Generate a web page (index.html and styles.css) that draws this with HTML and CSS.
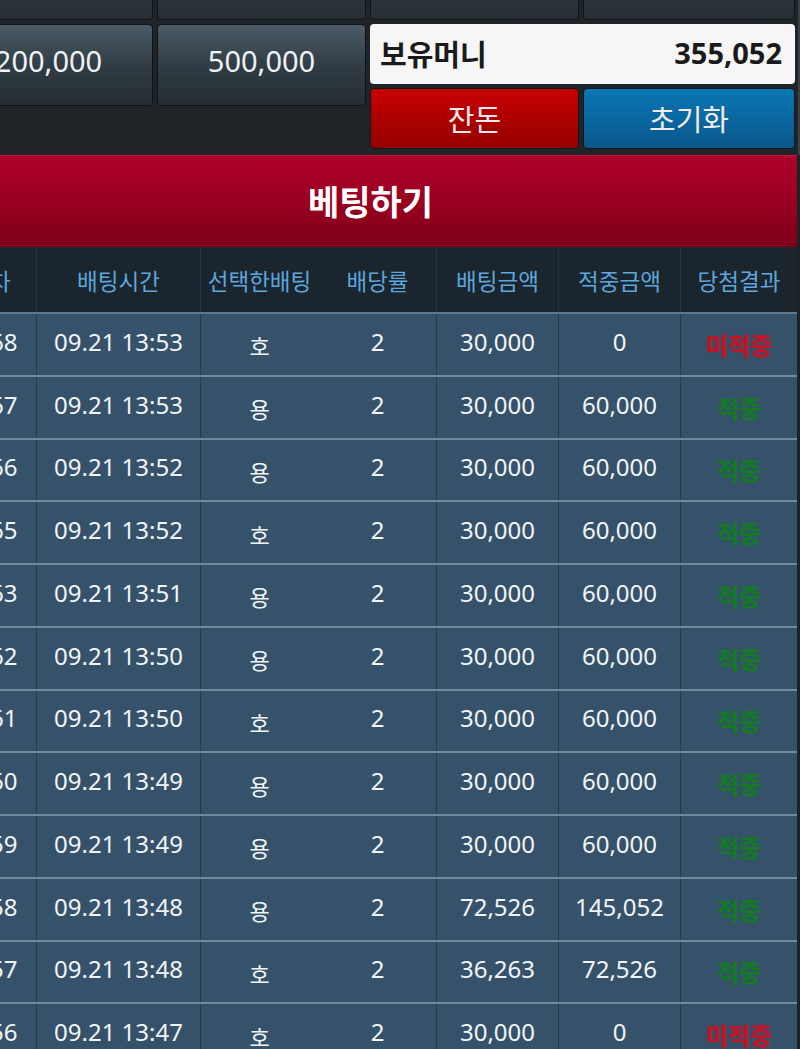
FILE: index.html
```html
<!DOCTYPE html>
<html lang="ko">
<head>
<meta charset="utf-8">
<title>베팅하기</title>
<link rel="stylesheet" href="styles.css">
</head>
<body>
<div class="page">
  <div class="panel">
    <div class="lgrid">
      <div class="chip"></div>
      <div class="chip"></div>
      <div class="chip">200,000</div>
      <div class="chip">500,000</div>
    </div>
    <div class="rgrid">
      <div class="chip"></div>
      <div class="chip"></div>
      <div class="money"><span class="money-label">보유머니</span><span class="money-val">355,052</span></div>
      <div class="act act-red">잔돈</div>
      <div class="act act-blue">초기화</div>
    </div>
  </div>
  <div class="titlebar">베팅하기</div>
  <div class="table">
    <div class="row head">
      <div class="c c1">회차</div>
      <div class="c c2">배팅시간</div>
      <div class="c c3">선택한배팅</div>
      <div class="c c4">배당률</div>
      <div class="c c5">배팅금액</div>
      <div class="c c6">적중금액</div>
      <div class="c c7">당첨결과</div>
    </div>
    <div class="row"><div class="c c1 num">1268</div><div class="c c2 num">09.21 13:53</div><div class="c c3 ko">호</div><div class="c c4 num">2</div><div class="c c5 num">30,000</div><div class="c c6 num">0</div><div class="c c7"><span class="lose">미적중</span></div></div>
    <div class="row"><div class="c c1 num">1267</div><div class="c c2 num">09.21 13:53</div><div class="c c3 ko">용</div><div class="c c4 num">2</div><div class="c c5 num">30,000</div><div class="c c6 num">60,000</div><div class="c c7"><span class="win">적중</span></div></div>
    <div class="row"><div class="c c1 num">1266</div><div class="c c2 num">09.21 13:52</div><div class="c c3 ko">용</div><div class="c c4 num">2</div><div class="c c5 num">30,000</div><div class="c c6 num">60,000</div><div class="c c7"><span class="win">적중</span></div></div>
    <div class="row"><div class="c c1 num">1265</div><div class="c c2 num">09.21 13:52</div><div class="c c3 ko">호</div><div class="c c4 num">2</div><div class="c c5 num">30,000</div><div class="c c6 num">60,000</div><div class="c c7"><span class="win">적중</span></div></div>
    <div class="row"><div class="c c1 num">1263</div><div class="c c2 num">09.21 13:51</div><div class="c c3 ko">용</div><div class="c c4 num">2</div><div class="c c5 num">30,000</div><div class="c c6 num">60,000</div><div class="c c7"><span class="win">적중</span></div></div>
    <div class="row"><div class="c c1 num">1262</div><div class="c c2 num">09.21 13:50</div><div class="c c3 ko">용</div><div class="c c4 num">2</div><div class="c c5 num">30,000</div><div class="c c6 num">60,000</div><div class="c c7"><span class="win">적중</span></div></div>
    <div class="row"><div class="c c1 num">1261</div><div class="c c2 num">09.21 13:50</div><div class="c c3 ko">호</div><div class="c c4 num">2</div><div class="c c5 num">30,000</div><div class="c c6 num">60,000</div><div class="c c7"><span class="win">적중</span></div></div>
    <div class="row"><div class="c c1 num">1260</div><div class="c c2 num">09.21 13:49</div><div class="c c3 ko">용</div><div class="c c4 num">2</div><div class="c c5 num">30,000</div><div class="c c6 num">60,000</div><div class="c c7"><span class="win">적중</span></div></div>
    <div class="row"><div class="c c1 num">1259</div><div class="c c2 num">09.21 13:49</div><div class="c c3 ko">용</div><div class="c c4 num">2</div><div class="c c5 num">30,000</div><div class="c c6 num">60,000</div><div class="c c7"><span class="win">적중</span></div></div>
    <div class="row"><div class="c c1 num">1258</div><div class="c c2 num">09.21 13:48</div><div class="c c3 ko">용</div><div class="c c4 num">2</div><div class="c c5 num">72,526</div><div class="c c6 num">145,052</div><div class="c c7"><span class="win">적중</span></div></div>
    <div class="row"><div class="c c1 num">1257</div><div class="c c2 num">09.21 13:48</div><div class="c c3 ko">호</div><div class="c c4 num">2</div><div class="c c5 num">36,263</div><div class="c c6 num">72,526</div><div class="c c7"><span class="win">적중</span></div></div>
    <div class="row"><div class="c c1 num">1256</div><div class="c c2 num">09.21 13:47</div><div class="c c3 ko">호</div><div class="c c4 num">2</div><div class="c c5 num">30,000</div><div class="c c6 num">0</div><div class="c c7"><span class="lose">미적중</span></div></div>
  </div>
</div>
</body>
</html>
```

FILE: styles.css
```css
html, body {
  margin: 0;
  padding: 0;
  background: #1c2226;
  overflow: hidden;
  height: 1049px;
}
body {
  font-family: "Noto Sans", "Noto Sans CJK KR", sans-serif;
}
.page {
  margin-left: -58px;
  width: 858px;
}
.panel {
  margin-top: -62px;
  padding: 0 5px 6px 2px;
  display: flex;
  gap: 4px;
  background: #1e2428;
  border-right: 2px solid #3a4146;
  box-sizing: border-box;
}
.lgrid {
  display: grid;
  grid-template-columns: 209px 209px;
  grid-template-rows: 82px 82px;
  gap: 4px;
}
.rgrid {
  display: grid;
  grid-template-columns: 209px 212px;
  grid-template-rows: 82px 60px 61px;
  gap: 4px;
}
.chip {
  box-sizing: border-box;
  border: 1px solid #0f1316;
  border-radius: 4px;
  background: linear-gradient(#4b5b67, #2f3a42 55%, #262e34);
  color: #eef2f4;
  font-size: 29px;
  display: flex;
  align-items: center;
  justify-content: center;
  padding-bottom: 9px;
}
.money {
  grid-column: 1 / 3;
  box-sizing: border-box;
  border-radius: 4px;
  background: #f6f6f6;
  display: flex;
  align-items: center;
  justify-content: space-between;
  padding: 0 13px 4px 10px;
  color: #1a1a1a;
  font-weight: bold;
}
.money-label {
  font-family: "Noto Sans CJK KR", sans-serif;
  font-size: 29px;
  padding-top: 2px;
}
.money-val {
  font-size: 29px;
}
.act {
  box-sizing: border-box;
  border: 1px solid #14181b;
  border-radius: 4px;
  display: flex;
  align-items: center;
  justify-content: center;
  font-family: "Noto Sans CJK KR", sans-serif;
  font-size: 29px;
  color: #f4ecec;
  padding-bottom: 2px;
}
.act-red {
  background: linear-gradient(#c80000, #a80000 60%, #960000);
}
.act-blue {
  background: linear-gradient(#0876b4, #0a649c 60%, #0a5688);
}
.titlebar {
  margin: 0 3px 0 2px;
  height: 92px;
  background: linear-gradient(#ae0029, #97001f 55%, #7c0018);
  border-top: 1px solid #c4143c;
  box-sizing: border-box;
  display: flex;
  align-items: center;
  justify-content: center;
  color: #ffffff;
  font-family: "Noto Sans CJK KR", sans-serif;
  font-weight: bold;
  font-size: 34px;
  padding-bottom: 2px;
}
.table {
  margin: 0 3px 0 2px;
}
.row {
  display: grid;
  grid-template-columns: 92px 164px 118px 118px 122px 122px 117px;
  height: 62.75px;
  box-sizing: border-box;
  border-bottom: 2px solid #6f8ba0;
  background: #36526a;
}
.row.head {
  height: 67px;
  background: #1b252d;
  border-bottom: 2px solid #5f7a8e;
}
.c {
  display: flex;
  align-items: center;
  justify-content: center;
  color: #f1f5f7;
  border-left: 1px solid #243a4b;
  white-space: nowrap;
}
.head .c {
  border-left-color: #27333c;
  color: #5ba7de;
  font-family: "Noto Sans CJK KR", sans-serif;
  font-size: 22.5px;
}
.c1 { border-left: none; }
.c4 { border-left-color: transparent !important; }
.num {
  font-size: 24px;
  padding-bottom: 6px;
}
.ko {
  font-family: "Noto Sans CJK KR", sans-serif;
  font-size: 22px;
  padding-top: 2px;
}
.lose, .win {
  font-family: "Noto Sans CJK KR", sans-serif;
  font-size: 24px;
  font-weight: bold;
  padding-top: 0;
}
.lose {
  color: #c21426;
  text-shadow: 0 0 1px #c21426;
}
.win {
  color: #157a28;
  text-shadow: 0 0 1px #157a28;
}
```
